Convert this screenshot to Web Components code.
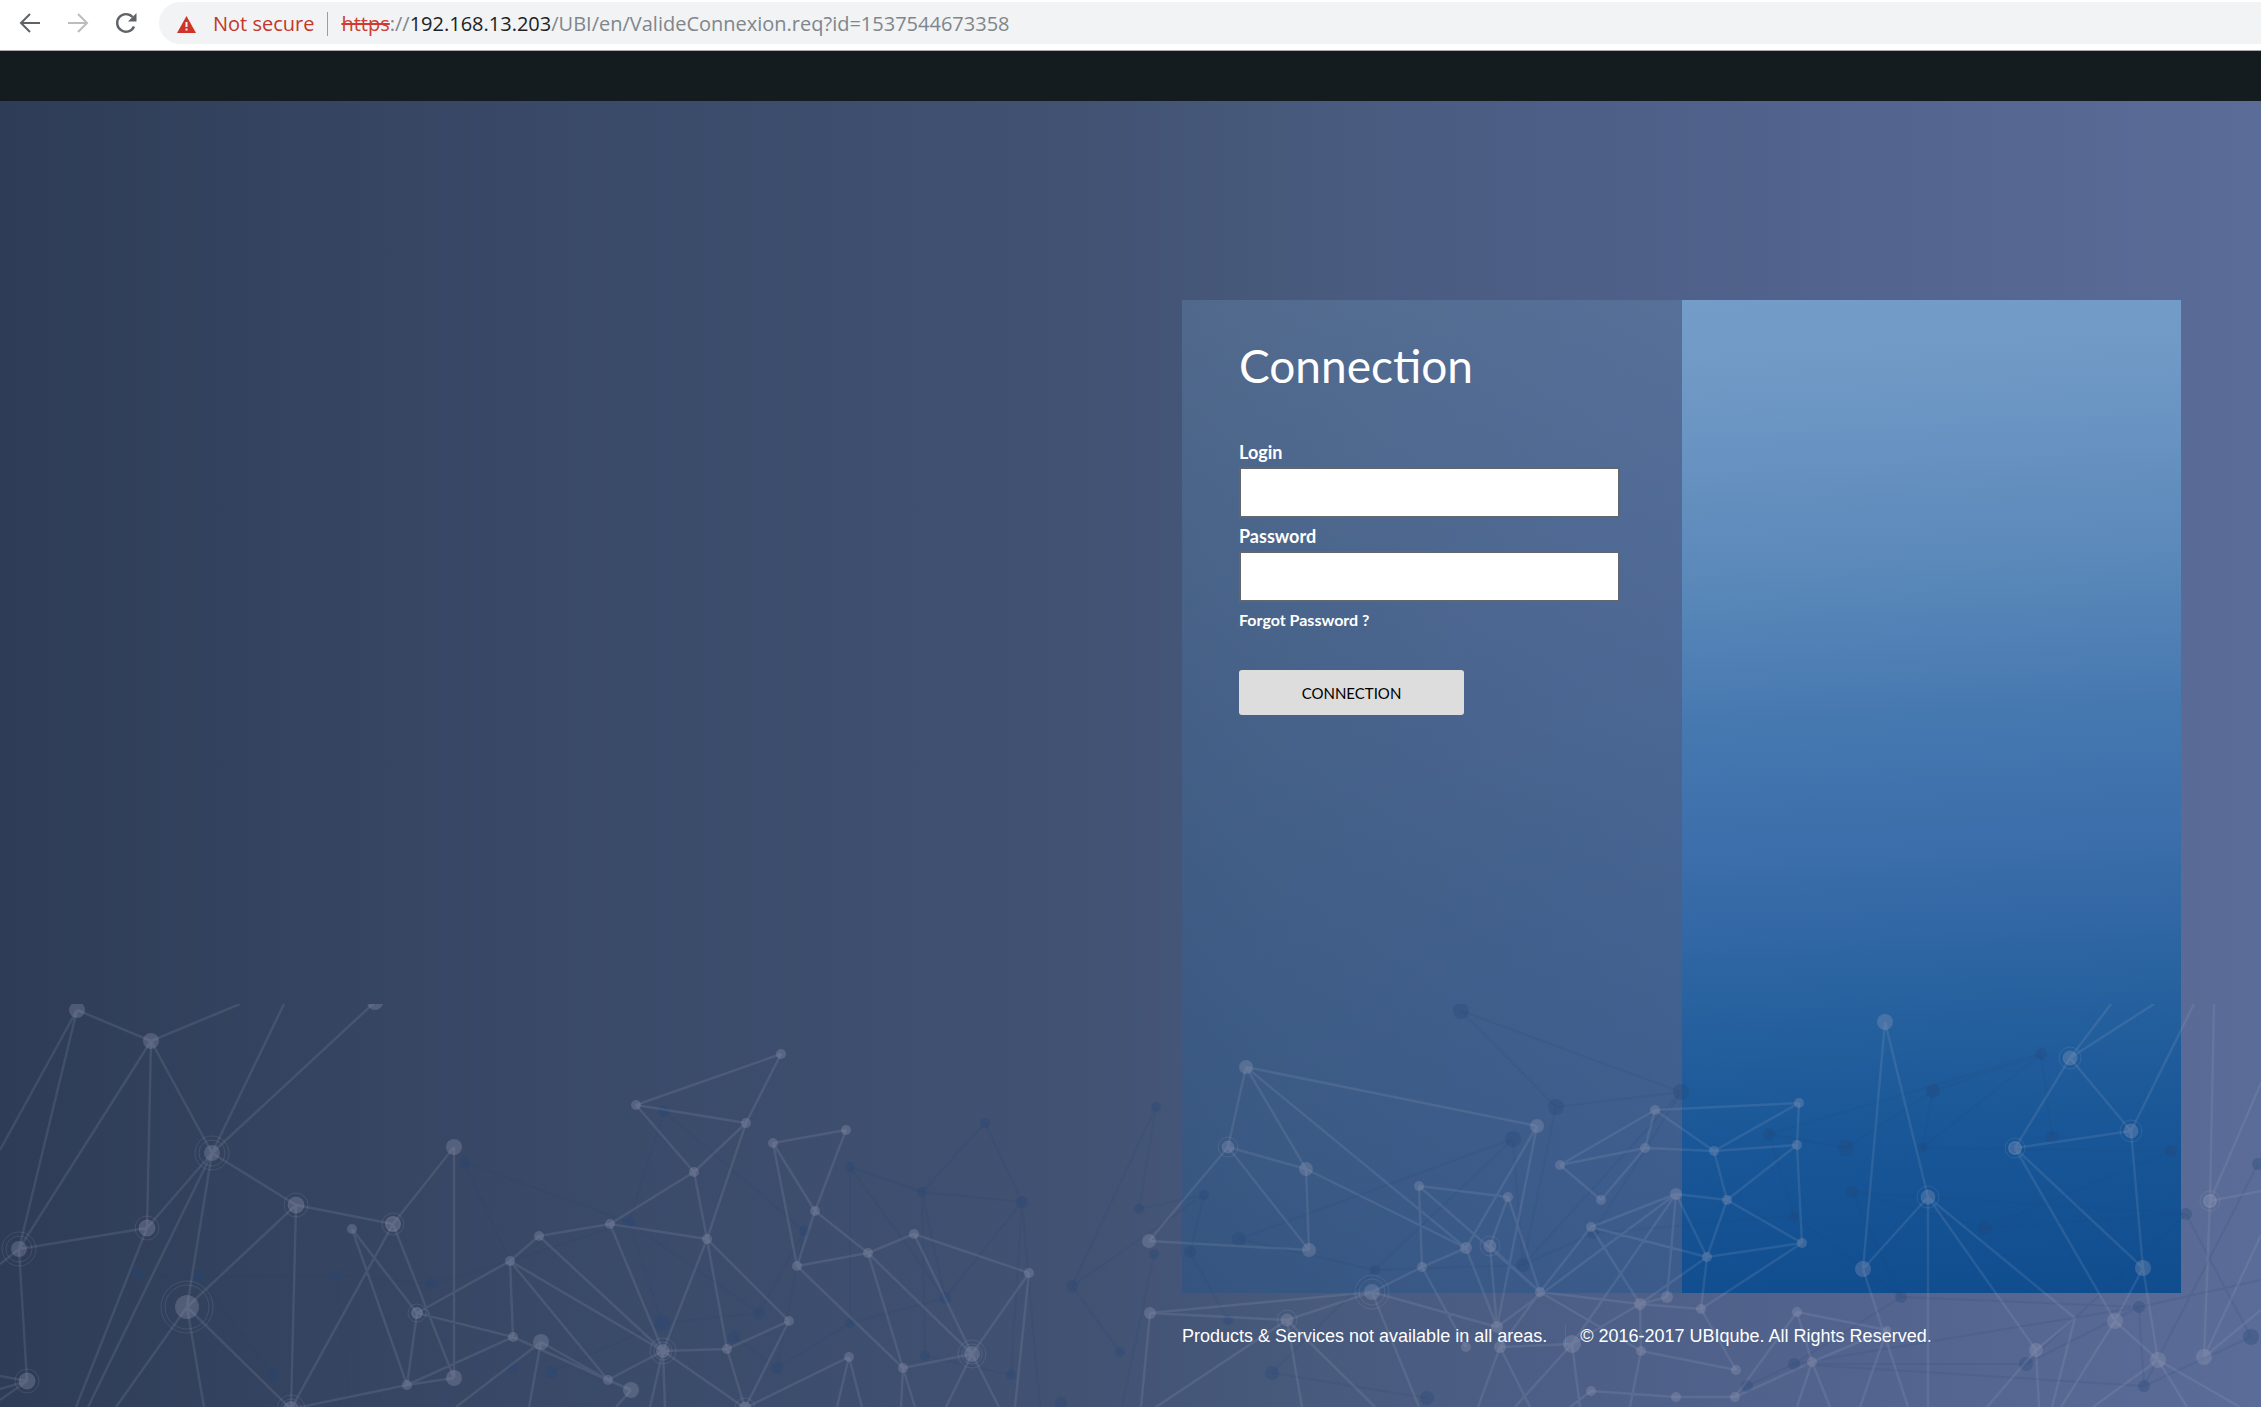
<!DOCTYPE html>
<html lang="en">
<head>
<meta charset="utf-8">
<title>Connection</title>
<style>
html, body { margin: 0; height: 100%; }
body { font-family: Lato, "Open Sans", sans-serif; color: #fff; }
</style>
</head>
<body>
<login-app></login-app>
<script>
const define = (name, html, setup) => {
  const tpl = document.createElement('template');
  tpl.innerHTML = html;
  customElements.define(name, class extends HTMLElement {
    constructor() {
      super();
      this.attachShadow({ mode: 'open' }).append(tpl.content.cloneNode(true));
    }
    connectedCallback() { if (setup) setup(this, this.shadowRoot); }
  });
};

define('browser-bar', `
<style>
:host { display: flex; align-items: center; height: 42px; padding: 2px 0 6px 16px; background: #fff; border-bottom: 1px solid #a9abad; font-family: "Open Sans", sans-serif; font-size: 20px; line-height: 28px; }
nav { display: flex; gap: 20px; margin-right: 19px; }
button { width: 28px; height: 28px; padding: 0; border: 0; background: none; color: #5f6368; }
button:disabled { color: #babcbe; }
svg { display: block; }
.address { flex: 1; box-sizing: border-box; display: flex; align-items: center; height: 42px; border-radius: 21px 0 0 21px; background: #f1f3f4; padding: 2px 0 0 18px; white-space: nowrap; }
.warn { color: #c5362b; margin-left: 17px; }
.rule { width: 1px; height: 24px; background: #9a9da0; margin: 0 13px; }
.url { color: #80868b; }
s { color: #cf3b30; }
b { font-weight: 400; color: #202124; }
</style>
<nav>
<button aria-label="Back"><svg width="28" height="28" viewBox="0 0 28 28" fill="none" stroke="currentColor" stroke-width="2"><path d="M24 14H6M14 5l-9 9 9 9"/></svg></button>
<button aria-label="Forward" disabled><svg width="28" height="28" viewBox="0 0 28 28" fill="none" stroke="currentColor" stroke-width="2"><path d="M4 14h18M14 5l9 9-9 9"/></svg></button>
<button aria-label="Reload"><svg width="28" height="28" viewBox="0 0 28 28"><path d="M22 17.5A8.8 8.8 0 1 1 20.5 8" fill="none" stroke="currentColor" stroke-width="2.4"/><path d="M24.500 4v8.500H16z" fill="currentColor"/></svg></button>
</nav>
<div class="address">
<svg width="19" height="17" viewBox="0 0 19 17"><path d="M9.500 0L19 17H0z" fill="#d03428"/><path d="M8.500 6h2v5h-2zM8.500 12.500h2v2h-2z" fill="#f1f3f4"/></svg>
<span class="warn">Not secure</span><span class="rule"></span>
<span class="url" role="textbox" aria-label="Address"><s>https</s>://<b>192.168.13.203</b>/UBI/en/ValideConnexion.req?id=1537544673358</span>
</div>`);

define('node-network', `
<style>
:host { display: block; pointer-events: none; }
svg { display: block; width: 100%; height: auto; }
</style>
<svg viewBox="0 1004 2261 403" aria-hidden="true">
<g id="dark" stroke="#264476" stroke-opacity=".13" stroke-width="2" fill="#264476" fill-opacity=".3"></g>
<g id="light" stroke="#b0b6cc" stroke-opacity=".14" stroke-width="2.500" fill="#a0a6bd" fill-opacity=".28"></g>
</svg>`, (host, root) => {
  const draw = (id, nodes, lines) => {
    const n = {};
    let dots = '', path = '';
    nodes.trim().split(/\s+/).forEach(t => {
      const [k, x, y, r, ring] = t.split(',');
      n[k] = [x, y];
      if (+r) dots += `<circle cx="${x}" cy="${y}" r="${r}" stroke="none"/>`;
      if (ring) dots += `<circle cx="${x}" cy="${y}" r="${ring}" fill="none" stroke-width="1"/><circle cx="${x}" cy="${y}" r="${ring - 4}" fill="none" stroke-width="1"/>`;
    });
    lines.trim().split(/\s+/).forEach(t => {
      const [from, rest] = t.split(':');
      rest.split(';').forEach(to => { path += `M${n[from]}L${n[to] || to}`; });
    });
    root.getElementById(id).innerHTML = `<path fill="none" d="${path}"/>${dots}`;
  };
  draw('light', `
a,77,1010,8 b,151,1041,8 c,375,1002,8 d,212,1153,8,17 e,19,1249,8,17 f,147,1228,8,12 g,296,1205,8,12 h,187,1307,12,26 i,27,1381,8,12
j,352,1229,5 k,393,1224,8,11 l,454,1147,8 m,417,1313,6,9 n,510,1261,5 o,539,1236,5 p,513,1337,5 q,541,1342,8 r,454,1378,8 s,407,1385,5 t,291,1409,8,14
A,781,1054,5 B,636,1105,5 C,746,1123,5 D,694,1172,5 E,610,1224,5 F,707,1239,5 G,773,1143,5 H,846,1130,5 I,815,1211,5 J,797,1266,5 K,868,1253,5
L,914,1234,5 M,1029,1273,5 N,663,1351,7,13 O,727,1349,5 P,789,1321,5 Q,849,1357,5 R,903,1368,5 S,972,1354,8,14 T,608,1380,5 U,631,1390,8 V,745,1408,6,10
a1,1246,1067,7 b1,1228,1147,6,10 c1,1306,1169,7 d1,1149,1241,7 e1,1309,1250,7 f1,1537,1126,7 g1,1419,1186,5 h1,1508,1197,5 i1,1560,1165,5 j1,1645,1148,5
k1,1655,1110,5 l1,1601,1200,5 m1,1591,1227,5 n1,1676,1194,6 o1,1466,1248,6 p1,1490,1246,6,10 q1,1422,1267,5 r1,1372,1292,8,17 s1,1540,1292,5
t1,1640,1304,6 u1,1667,1297,6 v1,1150,1313,6 w1,1287,1320,6,10 x1,1497,1327,6 y1,1500,1347,6 z1,1572,1344,9 aa,1466,1347,5 ab,1641,1351,5 ac,1591,1391,5 ad,1676,1397,5
A2,1799,1103,5 B2,1797,1145,5 C2,1714,1151,5 D2,1727,1200,5 E2,1802,1243,5 F2,1707,1257,5 G2,1701,1309,5 H2,1797,1312,5 I2,1885,1022,8
J2,1928,1197,7,11 K2,1863,1269,8 L2,2070,1058,7,11 M2,2131,1131,7,11 N2,2015,1148,7,10 O2,2143,1268,8 P2,2115,1321,8 Q2,2036,1350,7 R2,2158,1360,8 S2,2204,1357,8
T2,2210,1201,7,10 U2,1736,1370,5 V2,1812,1362,5 W2,1735,1397,5 X2,2075,1318,0 Y2,1887,1330,4`, `
a:b;e;0,1150 b:240,1004;e;f;d d:284,1004;c;f;h;g;88,1407 f:e;76,1407 e:i;0,1264 i:0,1376;0,1389;0,1400 h:g;t;116,1407;204,1407
g:t;k k:t;r;l l:r j:m;s m:n;p;s n:o;p;N;T o:E;N p:s;T q:456,1407;529,1407;T r:s s:t
A:B;C B:C;D C:D;F D:E;F E:F;N F:N;O;P G:H;I;J H:I I:J;K J:K;R K:L;R;S L:M;S M:S;1015,1407 N:O;T;650,1407;665,1407;V O:P;V P:V Q:V;837,1407;862,1407
R:S;901,1407;915,1407 S:946,1407;999,1407 U:616,1407 T:U
a1:b1;c1;o1;f1 b1:c1;d1;e1 c1:e1;o1 d1:e1 f1:o1;x1 g1:h1;s1;q1 h1:p1;s1 o1:x1;q1 p1:s1;x1 q1:r1;aa r1:v1;w1;x1;1419,1407 v1:w1;1141,1407
w1:1156,1407;1302,1407;1375,1407 i1:j1;k1;l1 j1:k1;l1;C2 n1:z1;x1;u1;m1;F2 m1:s1;t1;F2 s1:t1;y1;ab t1:u1;z1;ab;G2 y1:z1;1478,1407;1530,1407 z1:1515,1407;1580,1407 ab:U2;1630,1407 ac:ad;1570,1407
A2:k1;C2;B2 B2:C2;D2;E2 C2:k1;D2 D2:n1;E2;F2 E2:F2;G2 F2:G2;t1 G2:U2 H2:Y2;W2 V2:W2;Y2;H2;1797,1407;1830,1407 W2:ad
I2:K2;J2 J2:K2;Q2;X2;1928,1407 K2:1908,1407 Y2:1860,1407 L2:2111,1004;2154,1004;M2;N2 N2:M2;O2;P2 M2:2194,1004;O2 O2:P2;R2 X2:Q2;2052,1407
P2:R2;2061,1407 Q2:1987,1407;2039,1407 R2:2093,1407;2187,1407;2240,1407 T2:2214,1004;2261,1083;2261,1191;S2 S2:2261,1235;2261,1310`);
  draw('dark', `
a,464,1162,6 b,138,1274,6 c,198,1277,6 d,336,1275,6 e,431,1284,6 f,273,1375,6 g,513,1369,5 h,551,1372,6
A,664,1111,6 B,629,1222,6 C,850,1167,5 D,922,1192,5 E,985,1123,5 F,1022,1202,6 G,1072,1286,6 H,662,1323,8 I,759,1313,6 J,734,1337,6 K,850,1323,5 L,945,1298,6
M,925,1356,5 N,1011,1375,5 O,804,1231,5 P,777,1368,6 Q,1120,1352,5 R,1061,1403,6
a1,1461,1011,8 b1,1556,1107,8 c1,1513,1139,8 d1,1681,1092,8 e1,1156,1107,5 f1,1139,1209,5 g1,1204,1195,5 h1,1239,1239,7 i1,1190,1252,6 j1,1154,1254,5
k1,1523,1265,7 l1,1272,1373,7 m1,1427,1398,7 n1,1228,1320,5 o1,1593,1233,6 p1,1375,1270,5
a2,1769,1134,6 b2,1846,1148,8 c2,1933,1091,7 d2,1922,1148,5 e2,2041,1054,6 f2,2052,1137,6 g2,2171,1151,6 h2,1852,1192,6 i2,1794,1216,5 j2,1985,1228,7
k2,2186,1214,6 l2,1901,1297,6 m2,2139,1307,6 n2,2026,1364,7 o2,2144,1386,6 p2,2251,1337,8 q2,1794,1364,6 r2,1747,1386,6 s2,2258,1164,6`, `
a:B;510,1261 b:c c:d;f d:e;350,1407 e:510,1261 A:B B:I;H;510,1261 H:I;h O:A;P I:O P:K;J K:L;C L:F;D C:D;L D:E;F;M E:F F:N;1040,1407 M:N G:e1;Q;g1
a1:b1;d1 b1:d1;k1 c1:h1;p1;k1 e1:f1 f1:g1 g1:i1 h1:p1 i1:n1 j1:1122,1407 p1:k1;l1 k1:o1;d1 l1:m1 o1:d1
a2:i2;b2;e2 b2:c2 c2:e2;d2 d2:e2;g2 e2:f2 h2:l2;j2;k2 i2:l2;o1 j2:g2;k2 k2:p2;n2 l2:q2;m2 m2:2261,1280;q2 n2:q2;m2 o2:m2;q2 p2:o2 r2:q2 s2:o2`);
});

define('form-field', `
<style>
:host { display: block; }
label { display: block; font-size: 18px; line-height: 24px; font-weight: 700; padding-bottom: 3px; }
input { display: block; box-sizing: border-box; width: 100%; height: 51px; border: 2px solid #62676d; background: #fff; padding: 0 12px; font: 18px Lato, sans-serif; }
</style>
<label for="field"></label><input id="field">`, (host, root) => {
  root.querySelector('label').textContent = host.getAttribute('label');
  root.querySelector('input').type = host.getAttribute('type') || 'text';
});

define('login-panel', `
<style>
:host { display: flex; min-height: 993px; }
section, aside { flex: none; box-sizing: border-box; width: 50%; }
section { padding: 36px 62px 0 57px; background: linear-gradient(175deg, rgba(115,160,200,.25), rgba(75,128,180,.26) 35%, rgba(45,105,163,.28) 60%, rgba(14,78,145,.3)); }
aside { background: linear-gradient(177deg, #749cc9 0%, #729ac7 6%, #5b89ba 27%, #4678b0 42%, #3a6daa 56%, #28629f 69%, #185697 84%, #0f4d8f 100%); }
h1 { margin: 0 0 44px; font-size: 46px; line-height: 60px; font-weight: 400; }
form-field + form-field { margin-top: 6px; }
a { display: block; width: max-content; color: #fff; font-size: 16px; line-height: 24px; font-weight: 700; text-decoration: none; margin: 6px 0 38px; }
button { display: block; width: 225px; height: 45px; border: 0; border-radius: 3px; background: #ddd; color: #000; font: 15px Lato, sans-serif; padding: 0; }
</style>
<section><h1>Connection</h1>
<form-field label="Login"></form-field>
<form-field label="Password" type="password"></form-field>
<a href="#">Forgot Password ?</a>
<button type="button">CONNECTION</button></section>
<aside></aside>`);

define('page-footer', `
<style>
:host { display: flex; align-items: center; font: 18px/24px "Liberation Sans", Arial, sans-serif; color: #fff; }
span + span { margin-left: 18px; padding-left: 14px; border-left: 1px solid #6c6670; }
</style>
<span>Products &amp; Services not available in all areas.</span><span>© 2016-2017 UBIqube. All Rights Reserved.</span>`);

define('login-app', `
<style>
:host { display: flex; flex-direction: column; min-height: 100vh; }
header { height: 50px; background: #151c1f; }
main { position: relative; flex: 1; background: linear-gradient(90deg, #2e3c57, #34435f 12%, #3a4a69 27%, #415273 48%, #47597b 56%, #4d5f87 70%, #566792 90%, #5a6c97); }
.content { width: 999px; margin: 0 80px 0 auto; padding-top: 199px; }
node-network { position: absolute; left: 0; right: 0; bottom: 0; }
page-footer { position: relative; margin-top: 31px; }
</style>
<browser-bar></browser-bar>
<header></header>
<main>
<div class="content"><login-panel></login-panel><page-footer></page-footer></div>
<node-network></node-network>
</main>`);
</script>
</body>
</html>
